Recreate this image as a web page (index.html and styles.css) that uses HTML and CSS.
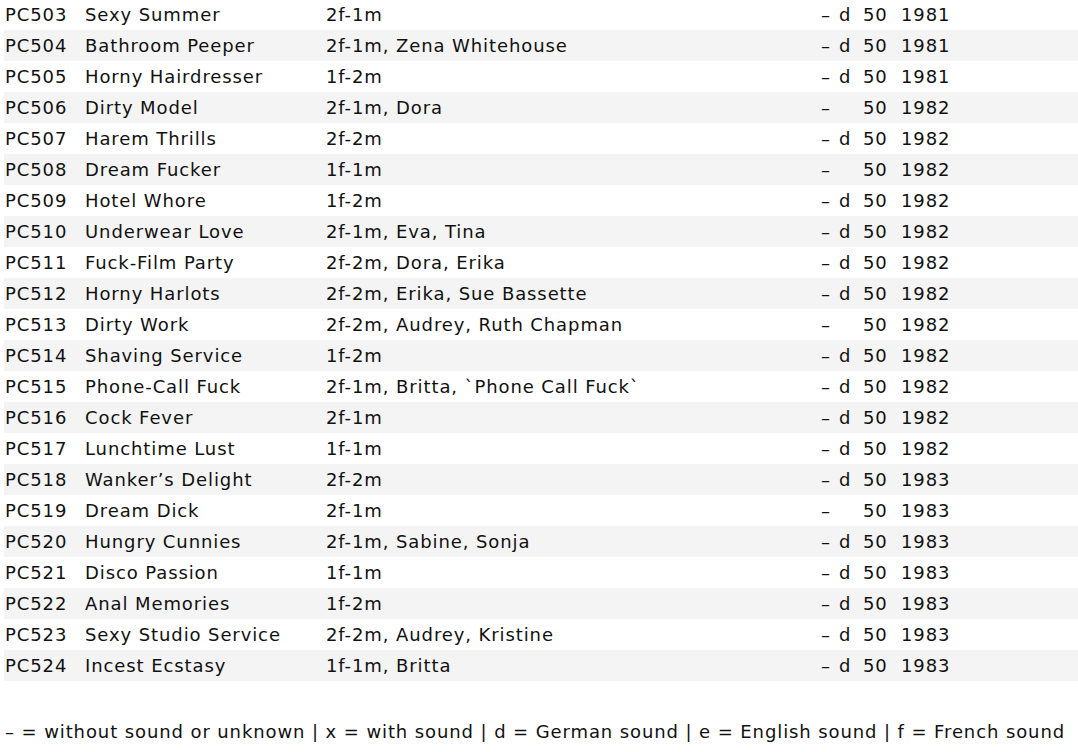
FILE: index.html
```html
<!DOCTYPE html>
<html>
<head>
<meta charset="utf-8">
<link rel="stylesheet" href="styles.css">
</head>
<body>
<table class="list">
<colgroup><col class="c-code"><col class="c-title"><col class="c-cast"><col class="c-snd"><col class="c-lang"><col class="c-len"><col class="c-year"></colgroup>
<tbody>
<tr><td>PC503</td><td>Sexy Summer</td><td>2f-1m</td><td>–</td><td>d</td><td>50</td><td>1981</td></tr>
<tr><td>PC504</td><td>Bathroom Peeper</td><td>2f-1m, Zena Whitehouse</td><td>–</td><td>d</td><td>50</td><td>1981</td></tr>
<tr><td>PC505</td><td>Horny Hairdresser</td><td>1f-2m</td><td>–</td><td>d</td><td>50</td><td>1981</td></tr>
<tr><td>PC506</td><td>Dirty Model</td><td>2f-1m, Dora</td><td>–</td><td></td><td>50</td><td>1982</td></tr>
<tr><td>PC507</td><td>Harem Thrills</td><td>2f-2m</td><td>–</td><td>d</td><td>50</td><td>1982</td></tr>
<tr><td>PC508</td><td>Dream Fucker</td><td>1f-1m</td><td>–</td><td></td><td>50</td><td>1982</td></tr>
<tr><td>PC509</td><td>Hotel Whore</td><td>1f-2m</td><td>–</td><td>d</td><td>50</td><td>1982</td></tr>
<tr><td>PC510</td><td>Underwear Love</td><td>2f-1m, Eva, Tina</td><td>–</td><td>d</td><td>50</td><td>1982</td></tr>
<tr><td>PC511</td><td>Fuck-Film Party</td><td>2f-2m, Dora, Erika</td><td>–</td><td>d</td><td>50</td><td>1982</td></tr>
<tr><td>PC512</td><td>Horny Harlots</td><td>2f-2m, Erika, Sue Bassette</td><td>–</td><td>d</td><td>50</td><td>1982</td></tr>
<tr><td>PC513</td><td>Dirty Work</td><td>2f-2m, Audrey, Ruth Chapman</td><td>–</td><td></td><td>50</td><td>1982</td></tr>
<tr><td>PC514</td><td>Shaving Service</td><td>1f-2m</td><td>–</td><td>d</td><td>50</td><td>1982</td></tr>
<tr><td>PC515</td><td>Phone-Call Fuck</td><td>2f-1m, Britta, `Phone Call Fuck`</td><td>–</td><td>d</td><td>50</td><td>1982</td></tr>
<tr><td>PC516</td><td>Cock Fever</td><td>2f-1m</td><td>–</td><td>d</td><td>50</td><td>1982</td></tr>
<tr><td>PC517</td><td>Lunchtime Lust</td><td>1f-1m</td><td>–</td><td>d</td><td>50</td><td>1982</td></tr>
<tr><td>PC518</td><td>Wanker’s Delight</td><td>2f-2m</td><td>–</td><td>d</td><td>50</td><td>1983</td></tr>
<tr><td>PC519</td><td>Dream Dick</td><td>2f-1m</td><td>–</td><td></td><td>50</td><td>1983</td></tr>
<tr><td>PC520</td><td>Hungry Cunnies</td><td>2f-1m, Sabine, Sonja</td><td>–</td><td>d</td><td>50</td><td>1983</td></tr>
<tr><td>PC521</td><td>Disco Passion</td><td>1f-1m</td><td>–</td><td>d</td><td>50</td><td>1983</td></tr>
<tr><td>PC522</td><td>Anal Memories</td><td>1f-2m</td><td>–</td><td>d</td><td>50</td><td>1983</td></tr>
<tr><td>PC523</td><td>Sexy Studio Service</td><td>2f-2m, Audrey, Kristine</td><td>–</td><td>d</td><td>50</td><td>1983</td></tr>
<tr><td>PC524</td><td>Incest Ecstasy</td><td>1f-1m, Britta</td><td>–</td><td>d</td><td>50</td><td>1983</td></tr>
</tbody>
</table>
<p class="legend">– = without sound or unknown | x = with sound | d = German sound | e = English sound | f = French sound</p>
</body>
</html>
```
FILE: styles.css
```css
html, body {
  margin: 0;
  padding: 0;
  background: #ffffff;
}
body {
  padding-left: 4px;
  font-family: "DejaVu Sans", Verdana, sans-serif;
  font-size: 18px;
  letter-spacing: 0.9px;
  color: #111111;
  overflow: hidden;
}
.list {
  border-collapse: collapse;
  table-layout: fixed;
  width: 1074px;
  margin-top: -1px;
}
.c-code { width: 80px; }
.c-title { width: 241px; }
.c-cast { width: 495px; }
.c-snd { width: 18px; }
.c-lang { width: 24px; }
.c-len { width: 38px; }
.list td {
  box-sizing: border-box;
  height: 31px;
  padding: 1px 0 0 1px;
  white-space: nowrap;
  vertical-align: middle;
  line-height: 22px;
}
.list tr:nth-child(even) td {
  background: #f4f4f4;
}
.legend {
  margin: 40px 0 0 1px;
  line-height: 22px;
  white-space: nowrap;
}
```
